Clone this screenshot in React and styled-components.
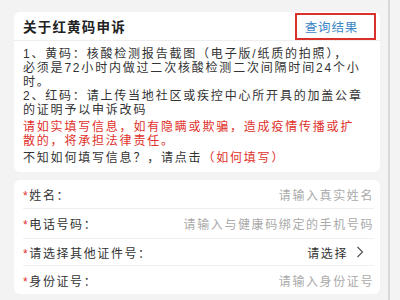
import React from 'react'
import styled, { createGlobalStyle } from 'styled-components'

const GlobalStyle = createGlobalStyle`
  html, body {
    margin: 0;
    padding: 0;
    background: #f3f3f3;
  }
  body {
    font-family: "Liberation Sans", "Noto Sans CJK SC", sans-serif;
    color: #333;
  }
`

const Page = styled.div`
  width: 390px;
  height: 300px;
  box-sizing: border-box;
  padding: 12px 8px 0 14px;
  border-right: 2px solid #d9d9d9;
  background: #f3f3f3;
  display: flex;
  flex-direction: column;
  gap: 8px;
`

const Card = styled.div`
  background: #fff;
  border-radius: 6px;
  overflow: hidden;
`

const CardHeader = styled.div`
  height: 28px;
  display: flex;
  align-items: center;
  justify-content: space-between;
  padding: 0 4px 0 9px;
  border-bottom: 1px solid #eeeeee;
`

const Title = styled.div`
  font-size: 13.5px;
  font-weight: 700;
  letter-spacing: 1.2px;
  color: #222;
`

const QueryButton = styled.div`
  height: 27px;
  display: flex;
  align-items: center;
  padding: 0 16px 0 8px;
  border: 2px solid #d9322b;
  box-sizing: border-box;
  margin-top: 1px;
  font-size: 12.5px;
  letter-spacing: 0.8px;
  color: #3a86c6;
`

const Body = styled.div`
  padding: 6px 9px 7px;
  font-size: 12px;
  line-height: 14px;
  letter-spacing: 1.8px;
  white-space: nowrap;
`

const Para = styled.p`
  margin: 0 0 ${p => p.gap || 0}px;
  color: ${p => (p.red ? '#e0312b' : '#333')};
`

const Red = styled.span`
  color: #e0312b;
`

const Row = styled.div`
  height: ${p => p.h || 28}px;
  margin: 0 6px 0 9px;
  display: flex;
  align-items: center;
  justify-content: space-between;
  border-bottom: ${p => (p.last ? 'none' : '1px solid #efefef')};
  font-size: 12px;
  letter-spacing: 1.6px;
`

const Label = styled.div`
  color: #333;
  &::before {
    content: '*';
    color: #e0312b;
  }
`

const Placeholder = styled.div`
  color: #aaa;
`

const Select = styled.div`
  display: flex;
  align-items: center;
  gap: 8px;
  margin-right: 10px;
  color: #333;
`

const Chevron = () => (
  <svg width="8" height="12" viewBox="0 0 8 12">
    <path d="M1.5 1 L6.5 6 L1.5 11" fill="none" stroke="#555" strokeWidth="1.2" />
  </svg>
)

export default function App() {
  return (
    <>
      <GlobalStyle />
      <Page>
        <Card>
          <CardHeader>
            <Title>关于红黄码申诉</Title>
            <QueryButton>查询结果</QueryButton>
          </CardHeader>
          <Body>
            <Para>
              1、黄码：核酸检测报告截图（电子版/纸质的拍照），
              <br />
              必须是72小时内做过二次核酸检测二次间隔时间24个小
              <br />
              时。
            </Para>
            <Para gap={3}>
              2、红码：请上传当地社区或疾控中心所开具的加盖公章
              <br />
              的证明予以申诉改码
            </Para>
            <Para red gap={3}>
              请如实填写信息，如有隐瞒或欺骗，造成疫情传播或扩
              <br />
              散的，将承担法律责任。
            </Para>
            <Para>
              不知如何填写信息？，请点击<Red>（如何填写）</Red>
            </Para>
          </Body>
        </Card>
        <Card>
          <Row h={28}>
            <Label>姓名：</Label>
            <Placeholder>请输入真实姓名</Placeholder>
          </Row>
          <Row h={29}>
            <Label>电话号码：</Label>
            <Placeholder>请输入与健康码绑定的手机号码</Placeholder>
          </Row>
          <Row h={26}>
            <Label>请选择其他证件号：</Label>
            <Select>
              请选择
              <Chevron />
            </Select>
          </Row>
          <Row h={28} last>
            <Label>身份证号：</Label>
            <Placeholder>请输入身份证号</Placeholder>
          </Row>
        </Card>
      </Page>
    </>
  )
}
